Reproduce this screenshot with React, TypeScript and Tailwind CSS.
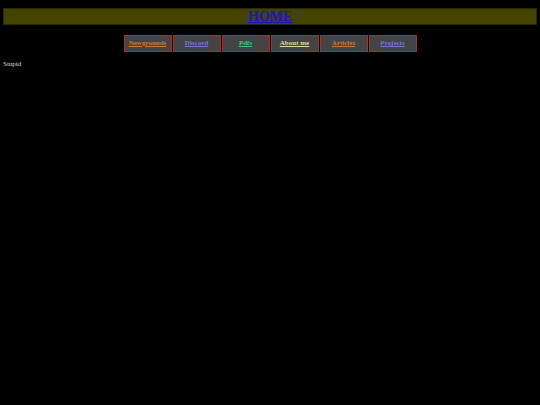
export default function App() {
  const links = [
    ["Newgrounds", "text-[#d2772e]"],
    ["Discord", "text-[#7777dd]"],
    ["Pdfs", "text-[#33cc77]"],
    ["About me", "text-[#dddd99]"],
    ["Articles", "text-[#d2772e]"],
    ["Projects", "text-[#7777dd]"],
  ];

  return (
    <div className="min-h-[405px] bg-black px-[3px] pt-[8px] font-['Liberation_Serif',serif]">
      <div className="flex h-[17px] items-center justify-center border border-solid border-[#2a2a00] bg-[#444400]">
        <a href="#" className="text-[14px] font-bold leading-none text-[#1515d0] underline">
          HOME
        </a>
      </div>
      <div className="mt-[10px] flex justify-center gap-[1px]">
        {links.map(([label, color]) => (
          <div
            key={label}
            className="flex h-[17px] w-[48px] items-center justify-center border border-solid border-[#b02a2a] bg-[#444444]"
          >
            <a href="#" className={`text-[7px] font-bold leading-none underline ${color}`}>
              {label}
            </a>
          </div>
        ))}
      </div>
      <p className="mt-[9px] text-[7px] leading-none text-[#dddddd]">Stupid</p>
    </div>
  );
}
